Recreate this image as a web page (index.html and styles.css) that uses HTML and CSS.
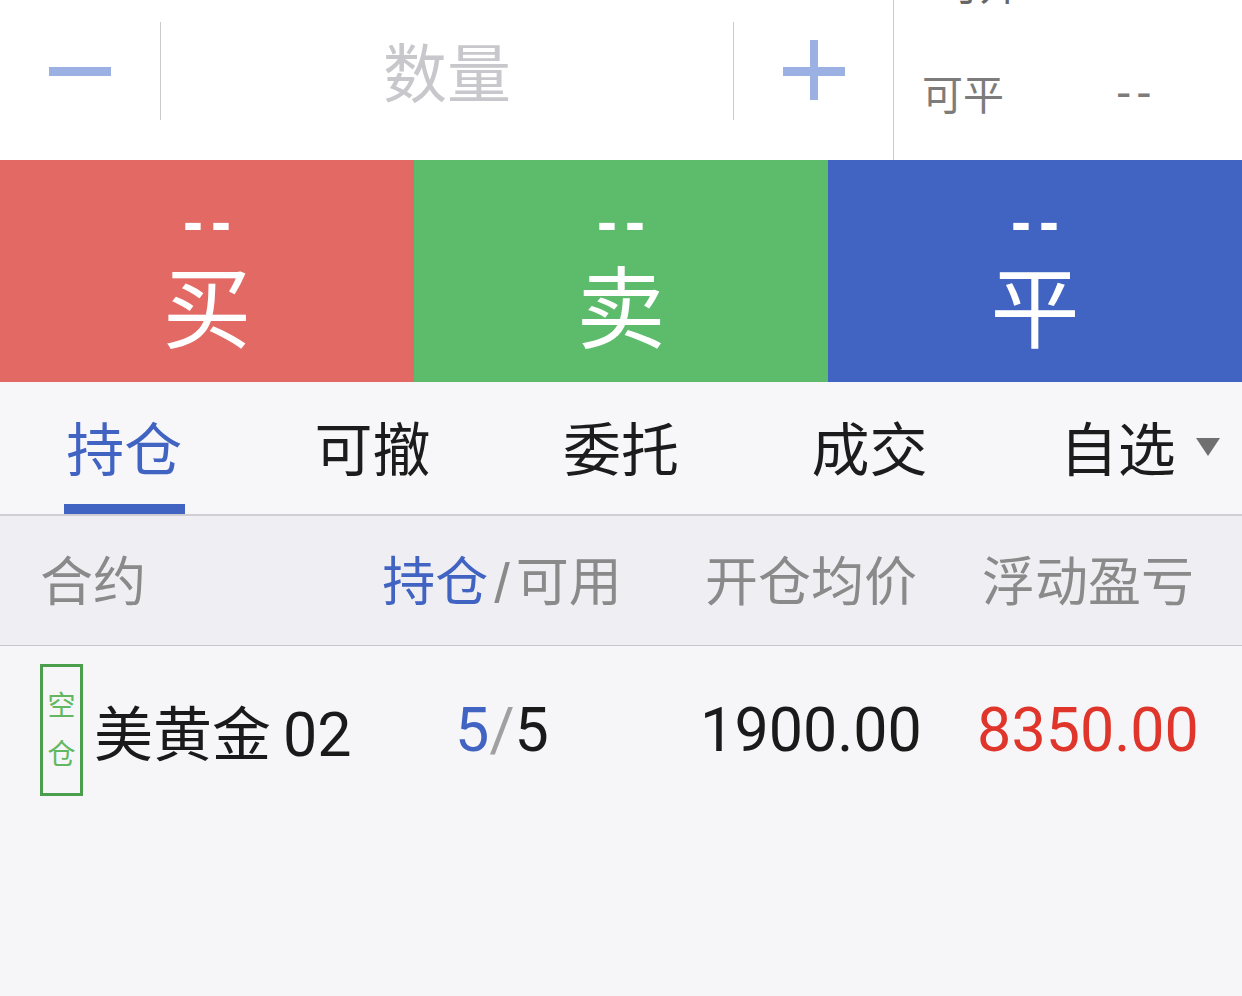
FILE: index.html
```html
<!DOCTYPE html>
<html lang="zh-CN">
<head>
    <meta charset="UTF-8">
    <meta name="viewport" content="width=device-width, initial-scale=1.0">
    <title>下单</title>
    <link rel="stylesheet" href="styles.css">
</head>
<body>
    <div class="trade">
        <div class="order-bar">
            <div class="stepper">
                <div class="step"><span class="bar-h"></span></div>
                <div class="divider"></div>
                <div class="qty">数量</div>
                <div class="divider"></div>
                <div class="step plus"><span class="bar-h"></span><span class="bar-v"></span></div>
            </div>
            <div class="avail">
                <div class="avail-row cut"><span class="label">可开</span></div>
                <div class="avail-row"><span class="label">可平</span><span class="val">--</span></div>
            </div>
        </div>

        <div class="actions">
            <div class="action buy"><span class="price">--</span><span class="verb">买</span></div>
            <div class="action sell"><span class="price">--</span><span class="verb">卖</span></div>
            <div class="action close"><span class="price">--</span><span class="verb">平</span></div>
        </div>

        <div class="tabs">
            <div class="tab active"><span>持仓</span></div>
            <div class="tab"><span>可撤</span></div>
            <div class="tab"><span>委托</span></div>
            <div class="tab"><span>成交</span></div>
            <div class="tab more"><span>自选</span><i class="caret"></i></div>
        </div>

        <div class="grid head">
            <div class="cell first">合约</div>
            <div class="cell"><span class="blue">持仓</span><span class="slash">/</span>可用</div>
            <div class="cell">开仓均价</div>
            <div class="cell">浮动盈亏</div>
        </div>

        <div class="grid row">
            <div class="cell first">
                <div class="tag"><span>空</span><span>仓</span></div>
                <span class="name">美黄金<span class="num">02</span></span>
            </div>
            <div class="cell num"><span class="blue">5</span><span class="slash">/</span>5</div>
            <div class="cell num">1900.00</div>
            <div class="cell num red">8350.00</div>
        </div>
    </div>
</body>
</html>
```

FILE: styles.css
```css
body {
    margin: 0;
    background: #f6f6f8;
    font-family: "Noto Sans CJK SC", "Noto Sans", sans-serif;
}
.trade {
    width: 1242px;
    min-height: 996px;
    overflow: hidden;
}

/* top order bar */
.order-bar {
    display: flex;
    height: 160px;
    background: #fff;
}
.stepper {
    display: flex;
    align-items: center;
    width: 893px;
    box-sizing: border-box;
    padding-bottom: 18px;
}
.step {
    position: relative;
    width: 160px;
    height: 100%;
    display: flex;
    align-items: center;
    justify-content: center;
}
.step.plus {
    width: 159px;
}
.bar-h {
    display: block;
    width: 62px;
    height: 9px;
    background: #9bb0e3;
}
.bar-v {
    position: absolute;
    left: 76px;
    top: 40px;
    width: 8px;
    height: 60px;
    background: #9bb0e3;
}
.divider {
    width: 1px;
    height: 98px;
    background: #cacaca;
}
.qty {
    flex: 1;
    text-align: center;
    font-size: 64px;
    color: #c8c8cc;
    line-height: 1;
    margin-top: -4px;
}
.avail {
    flex: 1;
    border-left: 1px solid #cacaca;
    overflow: hidden;
}
.avail-row {
    display: flex;
    align-items: center;
    height: 60px;
    padding-left: 28px;
    color: #7c7c7c;
    font-size: 41px;
}
.avail-row.cut {
    margin-top: -48px;
    padding-left: 44px;
    color: #666;
}
.avail-row + .avail-row {
    margin-top: 50px;
}
.avail-row .label {
    width: 194px;
}
.avail-row .val {
    font-family: "Liberation Sans", sans-serif;
    font-size: 46px;
    letter-spacing: 5px;
}

/* buy / sell / close */
.actions {
    display: flex;
    height: 222px;
}
.action {
    flex: 1;
    display: flex;
    flex-direction: column;
    align-items: center;
    color: #fff;
}
.buy { background: #e36a64; }
.sell { background: #5dbb6c; }
.close { background: #4164c3; }
.price {
    margin-top: 32px;
    font-family: "Liberation Sans", sans-serif;
    font-weight: bold;
    font-size: 60px;
    line-height: 1;
    letter-spacing: 8px;
    padding-left: 8px;
}
.verb {
    font-size: 89px;
    line-height: 1;
    margin-top: 6px;
}

/* tabs */
.tabs {
    display: flex;
    height: 132px;
    background: #f7f7f9;
    border-bottom: 2px solid #cfcfd3;
}
.tab {
    position: relative;
    flex: 1;
    display: flex;
    flex-direction: column;
    align-items: center;
    justify-content: center;
    font-size: 58px;
    color: #1c1c1c;
}
.tab span {
    line-height: 1;
    margin-top: -4px;
}
.tab.active {
    color: #4164c3;
}
.tab.active::after {
    content: "";
    position: absolute;
    bottom: 0;
    width: 121px;
    height: 10px;
    background: #4164c3;
}
.caret {
    position: absolute;
    left: 202px;
    top: 56px;
    width: 0;
    height: 0;
    border-left: 12px solid transparent;
    border-right: 12px solid transparent;
    border-top: 18px solid #707070;
}

/* table */
.grid {
    display: grid;
    grid-template-columns: 340px 244px 374px 180px;
    padding-left: 40px;
    align-items: center;
}
.cell {
    display: flex;
    justify-content: center;
    align-items: center;
    white-space: nowrap;
}
.cell.first {
    justify-content: flex-start;
}
.head {
    box-sizing: border-box;
    height: 130px;
    padding-bottom: 6px;
    background: #efeff3;
    border-bottom: 1px solid #c8c8cc;
    font-size: 53px;
    color: #8a8a8a;
}
.head .slash {
    font-family: "Liberation Sans", sans-serif;
    font-size: 56px;
    margin: 0 6px;
    position: relative;
    top: 5px;
}
.blue {
    color: #4164c3;
}
.row {
    height: 168px;
    font-size: 59px;
    color: #1a1a1a;
}
.tag {
    box-sizing: border-box;
    width: 43px;
    height: 132px;
    margin-right: 11px;
    border: 3px solid #4b9e4b;
    display: flex;
    flex-direction: column;
    align-items: center;
    justify-content: center;
    gap: 20px;
    padding-bottom: 4px;
    font-size: 28px;
    line-height: 1;
    color: #62b862;
}
.num {
    font-family: Roboto, "Noto Sans CJK SC", sans-serif;
    font-size: 61px;
}
.name .num {
    margin-left: 12px;
}
.row .slash {
    color: #a0a0a0;
}
.red {
    color: #e0352b;
}
```
